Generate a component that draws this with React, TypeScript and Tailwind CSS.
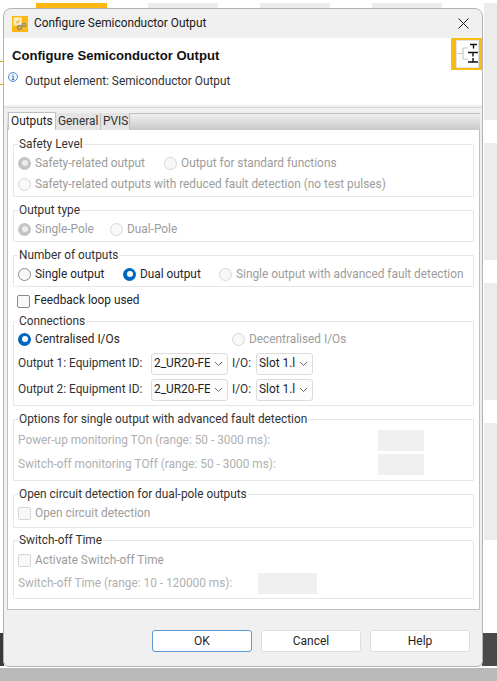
import type { ReactNode } from 'react';

const font = "font-['Roboto',sans-serif]";

function Radio({ state = 'off' }: { state?: 'off' | 'on' | 'dim' | 'dimOn' }) {
  if (state === 'on') {
    return (
      <span className="flex h-[13px] w-[13px] shrink-0 items-center justify-center rounded-full bg-[#0067c0]">
        <span className="h-[6px] w-[6px] rounded-full bg-white" />
      </span>
    );
  }
  if (state === 'dimOn') {
    return (
      <span className="flex h-[13px] w-[13px] shrink-0 items-center justify-center rounded-full bg-[#c4c4c4]">
        <span className="h-[6px] w-[6px] rounded-full bg-white/70" />
      </span>
    );
  }
  return (
    <span
      className={`h-[13px] w-[13px] shrink-0 rounded-full border bg-[#f8f8f8] ${state === 'off' ? 'border-[#8a8a8a]' : 'border-[#d6d6d6]'}`}
    />
  );
}

function RadioOption({ label, state, width, dim }: { label: string; state?: 'off' | 'on' | 'dim' | 'dimOn'; width: string; dim?: boolean }) {
  return (
    <label className={`flex items-center gap-[4px] whitespace-nowrap ${width} ${dim ? 'text-[#9c9c9c]' : 'text-[#262626]'}`}>
      <Radio state={state} />
      {label}
    </label>
  );
}

function CheckBox({ dim }: { dim?: boolean }) {
  return (
    <span className={`h-[13px] w-[13px] shrink-0 rounded-[2px] border bg-[#f8f8f8] ${dim ? 'border-[#d6d6d6]' : 'border-[#8a8a8a]'}`} />
  );
}

function Group({ title, className, children }: { title: string; className: string; children: ReactNode }) {
  return (
    <fieldset className={`mx-[5px] rounded-[1px] border border-[#e6e6e6] ${className}`}>
      <legend className="ml-[4px] px-px leading-[16px] text-[#333333]">{title}</legend>
      {children}
    </fieldset>
  );
}

function Select({ value, width }: { value: string; width: string }) {
  return (
    <div className={`flex h-[22px] items-center rounded-[3px] border border-[#dcdcdc] bg-[#fcfcfc] pl-[2px] ${width}`}>
      <span className="flex-1 overflow-hidden whitespace-nowrap text-[#1f1f1f]">{value}</span>
      <svg width="9" height="6" viewBox="0 0 9 6" className="mx-[4px] shrink-0">
        <path d="M1 1l3.5 3.5L8 1" fill="none" stroke="#6e6e6e" strokeWidth="1" />
      </svg>
    </div>
  );
}

function EquipmentRow({ n }: { n: number }) {
  return (
    <div className="flex h-[22px] items-center pl-[4px]">
      <span className="w-[133px] whitespace-nowrap text-[#333333]">{`Output ${n}: Equipment ID:`}</span>
      <Select value="2_UR20-FE" width="w-[77px]" />
      <span className="ml-[4px] w-[24px] text-[#333333]">I/O:</span>
      <Select value="Slot 1.l" width="w-[57px]" />
    </div>
  );
}

function DialogButton({ label, primary }: { label: string; primary?: boolean }) {
  return (
    <button
      className={`h-[22px] w-[100px] rounded-[3px] border bg-white text-[12px] text-[#1f1f1f] ${primary ? 'border-[#5c9ad6]' : 'border-[#dedede]'}`}
    >
      {label}
    </button>
  );
}

function TitleIcon() {
  return (
    <svg width="16" height="16" viewBox="0 0 16 16" className="shrink-0">
      <rect width="16" height="16" fill="#fdb813" />
      <rect x="2" y="2" width="7" height="7" fill="#fde6ae" stroke="#fff3d6" />
      <path d="M4 6l1.5 1L7 4" fill="none" stroke="#d29a1a" strokeWidth="0.8" />
      <circle cx="7.5" cy="11.5" r="2" fill="none" stroke="#8c8c80" strokeWidth="1.4" />
      <circle cx="12" cy="9" r="1.7" fill="none" stroke="#8c8c80" strokeWidth="1.3" />
    </svg>
  );
}

function HeaderIcon() {
  return (
    <svg width="31" height="32" viewBox="0 0 31 32" className="absolute right-0 top-0">
      <rect width="31" height="32" fill="#f7bd12" />
      <rect x="5.5" y="2.5" width="22" height="27" fill="#ffffff" stroke="#e2e2e2" />
      <path d="M6 15.5h6M12 10v11M12 10h5M12 21h5" fill="none" stroke="#c8c8c8" strokeWidth="1.2" />
      <path d="M19 6.5h7M22.5 6.5v4M17 14.5h10M22 14.5v4M17 24h10M22 20v4" fill="none" stroke="#111111" strokeWidth="1.4" />
    </svg>
  );
}

function InfoIcon() {
  return (
    <svg width="10" height="10" viewBox="0 0 10 10" className="shrink-0">
      <circle cx="5" cy="5" r="4.5" fill="#eef5fc" stroke="#3f86c9" strokeWidth="0.9" />
      <path d="M5 2.2v1M4.2 4.3H5.2V7.6M4 7.6h2.2" fill="none" stroke="#1f5fa8" strokeWidth="0.9" />
    </svg>
  );
}

export default function App() {
  return (
    <div className={`relative h-[681px] w-[497px] overflow-hidden bg-white text-[11.85px] ${font}`}>
      {/* stuff behind the dialog */}
      <div className="absolute left-[36px] top-[3px] h-[5px] w-[71px] bg-[#fdb813]" />
      <div className="absolute left-[148px] top-[3px] h-[5px] w-[70px] bg-[#ececec]" />
      <div className="absolute left-[260px] top-[3px] h-[5px] w-[70px] bg-[#ececec]" />
      <div className="absolute left-[372px] top-[3px] h-[5px] w-[70px] bg-[#ececec]" />
      <div className="absolute left-[484px] top-[3px] h-[117px] w-[13px] bg-[#ececec]" />
      <div className="absolute left-[484px] top-[143px] h-[117px] w-[13px] bg-[#ececec]" />
      <div className="absolute left-[484px] top-[283px] h-[117px] w-[13px] bg-[#ececec]" />
      <div className="absolute left-[484px] top-[423px] h-[117px] w-[13px] bg-[#ececec]" />
      <div className="absolute left-0 top-[61px] h-px w-[4px] bg-[#d9a520]" />
      <div className="absolute left-0 top-[84px] h-px w-[4px] bg-[#d9a520]" />
      <div className="absolute left-0 top-[633px] h-[33px] w-[4px] bg-[#3a3a3a]" />
      <div className="absolute left-[482px] top-[633px] h-[33px] w-[15px] bg-[#4a4a4a]" />
      <div className="absolute bottom-0 left-0 h-[13px] w-full bg-[#b9b9b9]" />

      {/* dialog */}
      <div className="absolute left-[3px] top-[8px] flex h-[659px] w-[480px] flex-col overflow-hidden rounded-t-[8px] rounded-b-[6px] border border-[#b4b4b4] bg-[#f0f0f0]">
        <div className="flex h-[29px] shrink-0 items-center pl-[8px] pr-[13px]">
          <TitleIcon />
          <span className="ml-[6px] flex-1 text-[#1a1a1a]">Configure Semiconductor Output</span>
          <svg width="11" height="11" viewBox="0 0 11 11">
            <path d="M.5.5l10 10M10.5.5l-10 10" stroke="#1a1a1a" strokeWidth="1" />
          </svg>
        </div>

        <div className="relative h-[67px] shrink-0 bg-white">
          <p className="pl-[8px] pt-[10px] font-['Liberation_Sans',sans-serif] text-[13.1px] font-bold leading-[16px] text-[#111111]">
            Configure Semiconductor Output
          </p>
          <div className="mt-[8px] flex items-start pl-[4px]">
            <InfoIcon />
            <span className="ml-[7px] mt-[1px] leading-[16px] text-[#333333]">Output element: Semiconductor Output</span>
          </div>
          <HeaderIcon />
        </div>

        <div className="h-[3px] shrink-0 border-b border-[#d8d8d8]" />

        <div className="mx-[3px] mt-[5px] flex h-[497px] w-[473px] shrink-0 flex-col">
          <div className="flex h-[17px] shrink-0 items-end bg-gradient-to-b from-[#f2f2f2] to-[#c9c9c9] pl-px shadow-[inset_0_1px_0_#c0c0c0]">
            <div className="h-[18px] w-[48px] border border-b-0 border-[#c0c0c0] bg-white pl-[2px] leading-[16px] text-[#222222]">Outputs</div>
            <div className="h-[17px] w-[45px] border-r border-[#c0c0c0] bg-[#e4e4e4] pl-[2px] leading-[16px] text-[#333333]">General</div>
            <div className="h-[17px] w-[29px] border-r border-[#c0c0c0] bg-[#e4e4e4] pl-[2px] leading-[16px] text-[#333333]">PVIS</div>
          </div>
          <div className="flex-1 border border-t-0 border-[#c0c0c0] bg-white pt-[6px]">
            <Group title="Safety Level" className="h-[61px]">
              <div className="mt-px flex h-[21px] items-center pl-[4px]">
                <RadioOption label="Safety-related output" state="dimOn" width="w-[146px]" dim />
                <RadioOption label="Output for standard functions" state="dim" width="w-[240px]" dim />
              </div>
              <div className="flex h-[21px] items-center pl-[4px]">
                <RadioOption label="Safety-related outputs with reduced fault detection (no test pulses)" state="dim" width="w-[400px]" dim />
              </div>
            </Group>

            <Group title="Output type" className="mt-[5px] h-[40px]">
              <div className="mt-px flex h-[21px] items-center pl-[4px]">
                <RadioOption label="Single-Pole" state="dimOn" width="w-[92px]" dim />
                <RadioOption label="Dual-Pole" state="dim" width="w-[80px]" dim />
              </div>
            </Group>

            <Group title="Number of outputs" className="mt-[5px] h-[40px]">
              <div className="mt-px flex h-[21px] items-center pl-[4px]">
                <RadioOption label="Single output" width="w-[105px]" />
                <RadioOption label="Dual output" state="on" width="w-[96px]" />
                <RadioOption label="Single output with advanced fault detection" state="dim" width="w-[250px]" dim />
              </div>
            </Group>

            <label className="ml-[9px] mt-[6px] flex h-[16px] items-center gap-[4px] text-[#262626]">
              <CheckBox />
              Feedback loop used
            </label>

            <Group title="Connections" className="mt-[4px] h-[93px]">
              <div className="flex h-[21px] items-center pl-[4px]">
                <RadioOption label="Centralised I/Os" state="on" width="w-[214px]" />
                <RadioOption label="Decentralised I/Os" state="dim" width="w-[130px]" dim />
              </div>
              <div className="mt-[3px]">
                <EquipmentRow n={1} />
              </div>
              <div className="mt-[4px]">
                <EquipmentRow n={2} />
              </div>
            </Group>

            <Group title="Options for single output with advanced fault detection" className="mt-[5px] h-[70px]">
              <div className="mt-[3px] flex h-[21px] items-center justify-between pl-[4px] pr-[49px] text-[#b0b0b0]">
                <span>Power-up monitoring TOn (range: 50 - 3000 ms):</span>
                <span className="h-[21px] w-[46px] bg-[#f0f0f0]" />
              </div>
              <div className="mt-[3px] flex h-[21px] items-center justify-between pl-[4px] pr-[49px] text-[#b0b0b0]">
                <span>Switch-off monitoring TOff (range: 50 - 3000 ms):</span>
                <span className="h-[21px] w-[46px] bg-[#f0f0f0]" />
              </div>
            </Group>

            <Group title="Open circuit detection for dual-pole outputs" className="mt-[5px] h-[42px]">
              <label className="mt-px flex h-[21px] items-center gap-[4px] pl-[4px] text-[#9c9c9c]">
                <CheckBox dim />
                Open circuit detection
              </label>
            </Group>

            <Group title="Switch-off Time" className="mt-[4px] h-[67px]">
              <label className="mt-[2px] flex h-[21px] items-center gap-[4px] pl-[4px] text-[#9c9c9c]">
                <CheckBox dim />
                Activate Switch-off Time
              </label>
              <div className="mt-[2px] flex h-[21px] items-center pl-[4px] text-[#b0b0b0]">
                <span className="w-[240px] whitespace-nowrap">Switch-off Time (range: 10 - 120000 ms):</span>
                <span className="h-[21px] w-[59px] bg-[#f0f0f0]" />
              </div>
            </Group>
          </div>
        </div>

        <div className="mt-[20px] flex gap-[9px] pl-[148px]">
          <DialogButton label="OK" primary />
          <DialogButton label="Cancel" />
          <DialogButton label="Help" />
        </div>
      </div>
    </div>
  );
}
